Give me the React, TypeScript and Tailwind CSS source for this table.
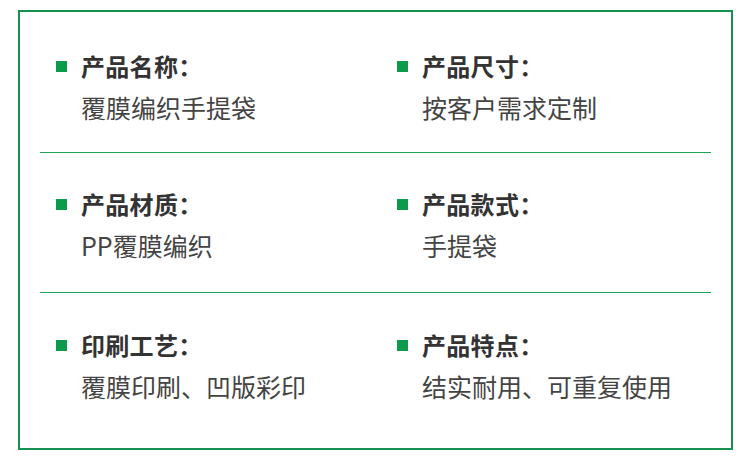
import React from 'react';

type Item = { label: string; value: string };

const rows: { items: Item[]; height: string; pt: string }[] = [
    {
        items: [
            { label: '产品名称：', value: '覆膜编织手提袋' },
            { label: '产品尺寸：', value: '按客户需求定制' },
        ],
        height: 'h-[140px]',
        pt: 'pt-[38px]',
    },
    {
        items: [
            { label: '产品材质：', value: 'PP覆膜编织' },
            { label: '产品款式：', value: '手提袋' },
        ],
        height: 'h-[139px]',
        pt: 'pt-[35px]',
    },
    {
        items: [
            { label: '印刷工艺：', value: '覆膜印刷、凹版彩印' },
            { label: '产品特点：', value: '结实耐用、可重复使用' },
        ],
        height: 'h-[155px]',
        pt: 'pt-[36px]',
    },
];

const Field: React.FC<{ item: Item; className?: string }> = ({ item, className }) => (
    <div className={`flex flex-col ${className ?? ''}`}>
        <div className="flex items-center gap-[14px] h-[32px]">
            <span className="w-[11px] h-[11px] bg-[#0c9b4c] shrink-0" />
            <span className="text-[24px] leading-[32px] font-bold text-[#333333] tracking-[0.3px]">{item.label}</span>
        </div>
        <div className="mt-[9px] pl-[25px] text-[25px] leading-[32px] text-[#444444]">{item.value}</div>
    </div>
);

export default function App() {
    return (
        <div
            className="w-[750px] h-[468px] bg-white pt-[10px] pl-[18px]"
            style={{ fontFamily: '"Noto Sans CJK SC", "Noto Sans", sans-serif' }}
        >
            <div className="w-[715px] h-[440px] border-2 border-[#17914f] px-[20px] flex flex-col">
                {rows.map((row, i) => (
                    <React.Fragment key={i}>
                        <div className={`${row.height} ${row.pt} shrink-0 pl-[16px] flex`}>
                            <Field item={row.items[0]} className="w-[341px]" />
                            <Field item={row.items[1]} />
                        </div>
                        {i < rows.length - 1 && <div className="h-px bg-[#1fa35b] shrink-0" />}
                    </React.Fragment>
                ))}
            </div>
        </div>
    );
}
